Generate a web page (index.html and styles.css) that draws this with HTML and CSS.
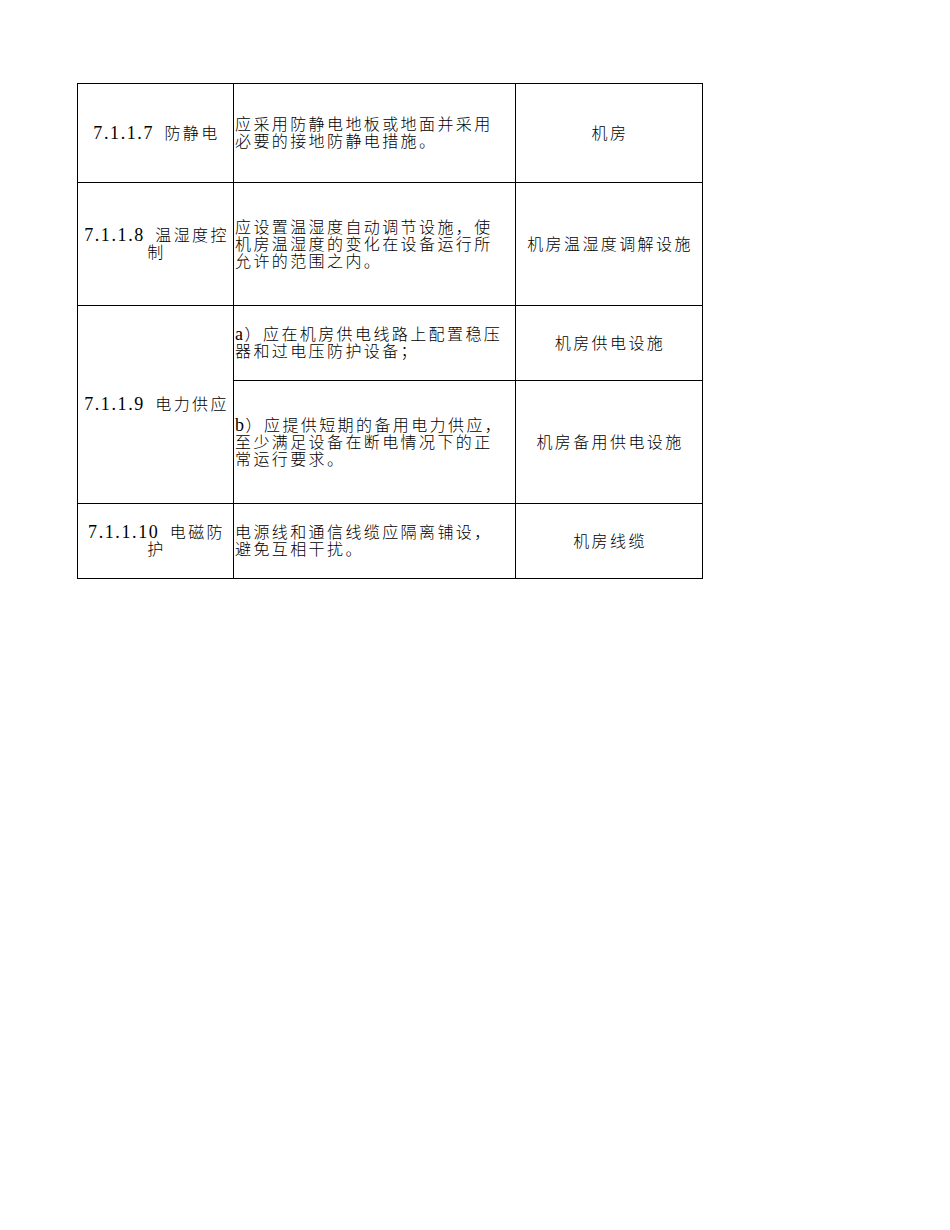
FILE: index.html
```html
<!DOCTYPE html>
<html lang="zh-CN">
<head>
<meta charset="utf-8">
<title>机房物理安全</title>
<link rel="stylesheet" href="styles.css">
</head>
<body>
<div class="page">
  <div class="sheet">
    <div class="cell item"><p class="txt"><span class="num">7.1.1.7</span>&#8194;防静电</p></div>
    <div class="cell req"><p class="txt">应采用防静电地板或地面并采用<br>必要的接地防静电措施。</p></div>
    <div class="cell obj"><p class="txt">机房</p></div>

    <div class="cell item"><p class="txt"><span class="num">7.1.1.8</span>&#8194;温湿度控<br>制</p></div>
    <div class="cell req"><p class="txt">应设置温湿度自动调节设施，使<br>机房温湿度的变化在设备运行所<br>允许的范围之内。</p></div>
    <div class="cell obj"><p class="txt">机房温湿度调解设施</p></div>

    <div class="cell item span2"><p class="txt"><span class="num">7.1.1.9</span>&#8194;电力供应</p></div>
    <div class="cell req"><p class="txt"><span class="num">a</span>）应在机房供电线路上配置稳压<br>器和过电压防护设备；</p></div>
    <div class="cell obj"><p class="txt">机房供电设施</p></div>
    <div class="cell req"><p class="txt"><span class="num">b</span>）应提供短期的备用电力供应，<br>至少满足设备在断电情况下的正<br>常运行要求。</p></div>
    <div class="cell obj"><p class="txt">机房备用供电设施</p></div>

    <div class="cell item"><p class="txt"><span class="num">7.1.1.10</span>&#8194;电磁防<br>护</p></div>
    <div class="cell req"><p class="txt">电源线和通信线缆应隔离铺设，<br>避免互相干扰。</p></div>
    <div class="cell obj"><p class="txt">机房线缆</p></div>
  </div>
</div>
</body>
</html>
```

FILE: styles.css
```css
html, body {
  margin: 0;
  padding: 0;
  background: #ffffff;
}

.page {
  padding: 83px 0 0 77px;
  font-family: "Liberation Serif", "Noto Sans CJK SC", serif;
  font-size: 16px;
  font-weight: 300;
  letter-spacing: 2.4px;
  line-height: 17px;
  color: #000000;
}

.sheet {
  display: grid;
  grid-template-columns: 156px 282px 187px;
  grid-template-rows: 99px 123px 75px 123px 75px;
  width: max-content;
  border-left: 1px solid #000000;
  border-top: 1px solid #000000;
}

.cell {
  border-right: 1px solid #000000;
  border-bottom: 1px solid #000000;
  display: flex;
  align-items: center;
  white-space: nowrap;
  overflow: hidden;
}

.txt {
  margin: 0;
  line-height: 17px;
}

.num {
  font-size: 18px;
  letter-spacing: 1.6px;
  line-height: 17px;
}

.item {
  justify-content: center;
  text-align: center;
  padding-left: 2px;
}

.span2 {
  grid-row: span 2;
}

.req {
  justify-content: flex-start;
  text-align: left;
  padding-left: 1px;
}

.obj {
  justify-content: center;
  text-align: center;
  padding-left: 2px;
}
```
